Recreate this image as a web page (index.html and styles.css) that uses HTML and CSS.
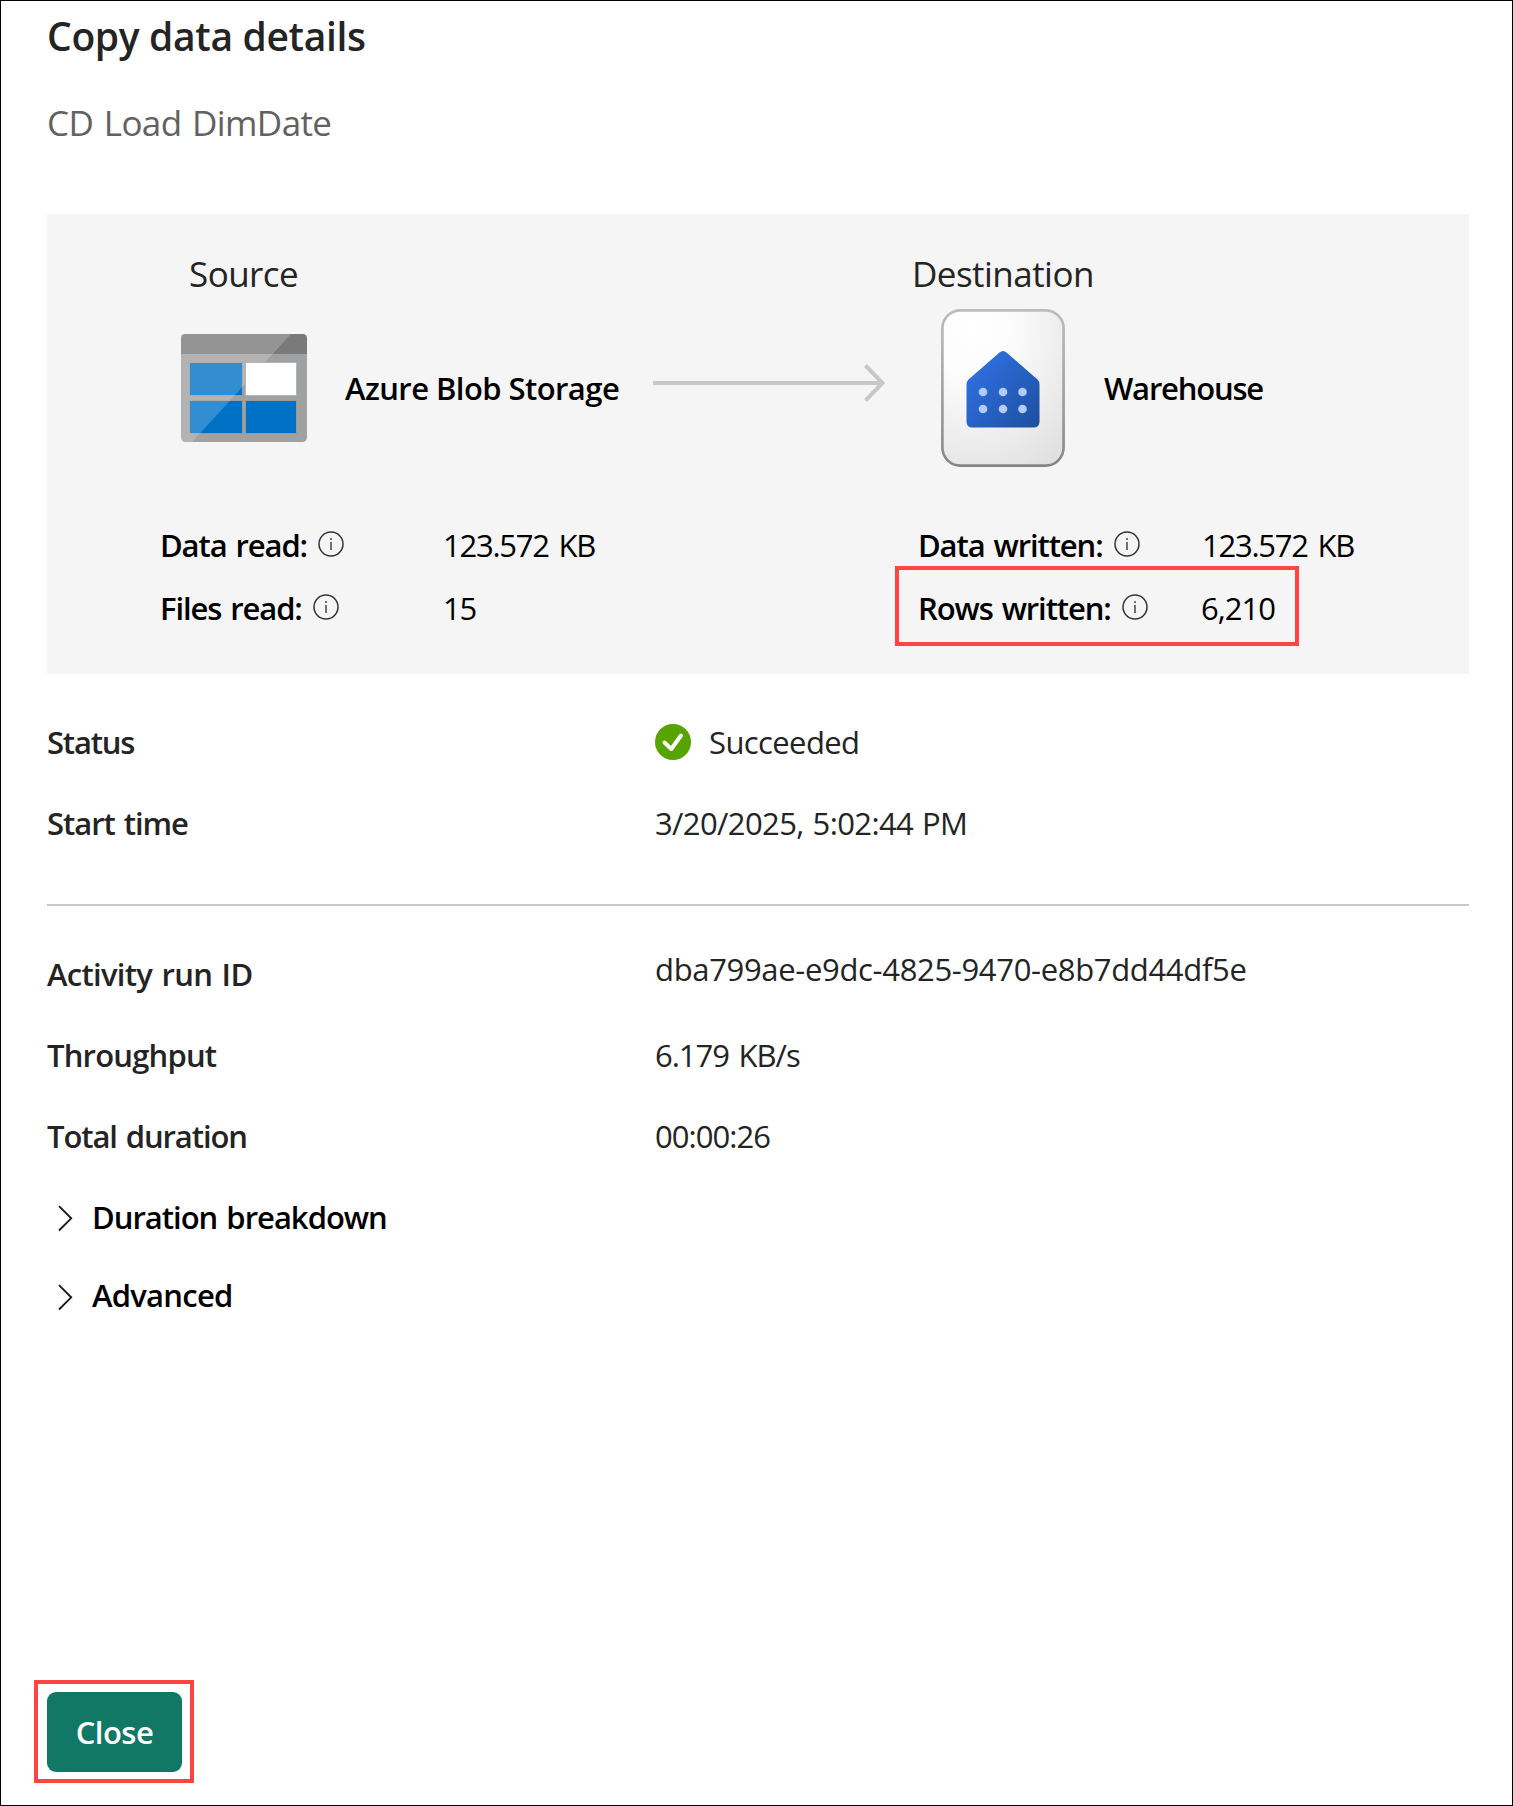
FILE: index.html
```html
<!DOCTYPE html>
<html lang="en">
<head>
<meta charset="utf-8">
<title>Copy data details</title>
<link rel="stylesheet" href="styles.css">
</head>
<body>
<svg class="defs" width="0" height="0" aria-hidden="true">
  <symbol id="info" viewBox="0 0 26 26">
    <circle cx="13" cy="13" r="12" fill="none" stroke="#333" stroke-width="1.5"/>
    <path d="M13 11v8" stroke="#444" stroke-width="1.5"/>
    <circle cx="13" cy="8" r="1" fill="#444"/>
  </symbol>
  <symbol id="chevron" viewBox="0 0 15 27">
    <path d="M1 1.2 13.2 13.3 1 25.5" fill="none" stroke="#1b1a19" stroke-width="1.9"/>
  </symbol>
</svg>
<main class="page">
  <h1 class="title">Copy data details</h1>
  <p class="subtitle">CD Load DimDate</p>

  <section class="panel">
    <div class="ends">
      <span class="source-head">Source</span>
      <span class="dest-head">Destination</span>
    </div>
    <div class="flow">
      <svg class="blob-icon" viewBox="0 0 126 108">
        <defs><clipPath id="frame"><rect width="126" height="108" rx="4.5"/></clipPath></defs>
        <g clip-path="url(#frame)">
          <rect width="126" height="108" fill="#a0a1a2"/>
          <rect width="126" height="20" fill="#7a7a7a"/>
          <g stroke="#97999b" stroke-width="1">
            <rect x="8.5" y="28.5" width="53" height="33" fill="#0072c6"/>
            <rect x="8.5" y="66.5" width="53" height="33" fill="#0072c6"/>
            <rect x="64.5" y="66.5" width="51" height="33" fill="#0072c6"/>
          </g>
          <path d="M0 0H110L11 108H0Z" fill="#fff" fill-opacity=".2"/>
          <rect x="64.5" y="28.5" width="51" height="33" fill="#fff" stroke="#b3b4b5" stroke-width="1"/>
        </g>
      </svg>
      <strong class="source-name">Azure Blob Storage</strong>
      <svg class="arrow" viewBox="0 0 232 38">
        <path d="M0 19H229M212.500 1.500 229.500 19 212.500 36.500" fill="none" stroke="#c8c8c8" stroke-width="4"/>
      </svg>
      <svg class="warehouse-icon" viewBox="0 0 124 158">
        <defs>
          <radialGradient id="card" cx=".25" cy=".1" r="1.1"><stop offset="0" stop-color="#fff"/><stop offset=".3" stop-color="#fcfcfc"/><stop offset="1" stop-color="#e0e0e0"/></radialGradient>
          <linearGradient id="edge" x1="0" y1="0" x2="0" y2="1"><stop offset="0" stop-color="#bdbdbd"/><stop offset="1" stop-color="#858585"/></linearGradient>
          <linearGradient id="house" x1=".1" y1=".2" x2="1" y2="1"><stop offset="0" stop-color="#2f6fe0"/><stop offset="1" stop-color="#1b4f9e"/></linearGradient>
        </defs>
        <rect x="1.400" y="1.400" width="121.200" height="155.200" rx="18" fill="url(#card)" stroke="url(#edge)" stroke-width="2.600"/>
        <path d="M58.500 43.500Q62 40.500 65.500 43.500L96.500 70.500Q98.500 72.500 98.500 75.500V112.500Q98.500 118.500 92.500 118.500H31.500Q25.500 118.500 25.500 112.500V75.500Q25.500 72.500 27.500 70.500Z" fill="url(#house)"/>
        <g fill="#b3cbf8"><circle cx="42" cy="83" r="4.300"/><circle cx="62" cy="83" r="4.300"/><circle cx="81.500" cy="83" r="4.300"/><circle cx="42" cy="100" r="4.300"/><circle cx="62" cy="100" r="4.300"/><circle cx="81.500" cy="100" r="4.300"/></g>
      </svg>
      <strong class="dest-name">Warehouse</strong>
    </div>
    <div class="stats">
      <div class="stat"><span class="stat-label read">Data read:</span><svg class="info"><use href="#info"/></svg></div>
      <span class="amount">123.572 KB</span>
      <div class="stat"><span class="stat-label written">Data written:</span><svg class="info"><use href="#info"/></svg></div>
      <span class="amount">123.572 KB</span>
      <div class="stat"><span class="stat-label read">Files read:</span><svg class="info"><use href="#info"/></svg></div>
      <span class="amount">15</span>
      <div class="stat marked"><span class="stat-label written">Rows written:</span><svg class="info"><use href="#info"/></svg></div>
      <span class="amount rows">6,210</span>
    </div>
  </section>

  <dl class="details summary">
    <dt class="status">Status</dt>
    <dd class="result"><svg class="check" viewBox="0 0 36 36"><circle cx="18" cy="18" r="18" fill="#57a300"/><path d="M9.500 18.500 16.300 25 26 11.500" fill="none" stroke="#fff" stroke-width="4" stroke-linecap="round" stroke-linejoin="round"/></svg>Succeeded</dd>
    <dt class="start">Start time</dt>
    <dd class="time">3/20/2025, 5:02:44 PM</dd>
  </dl>
  <dl class="details run">
    <dt class="activity">Activity run ID</dt>
    <dd class="run-id">dba799ae-e9dc-4825-9470-e8b7dd44df5e</dd>
    <dt>Throughput</dt>
    <dd class="rate">6.179 KB/s</dd>
    <dt class="total">Total duration</dt>
    <dd class="duration">00:00:26</dd>
  </dl>
  <div class="expander"><svg class="chevron"><use href="#chevron"/></svg><span class="breakdown">Duration breakdown</span></div>
  <div class="expander advanced"><svg class="chevron"><use href="#chevron"/></svg><span>Advanced</span></div>

  <div class="footer"><button class="close">Close</button></div>
</main>
</body>
</html>
```
FILE: styles.css
```css
*, *::after { box-sizing: border-box; margin: 0; padding: 0; }
body { background: #fff; }
.defs { position: absolute; }
svg { flex: none; display: block; }
.page {
  display: flex;
  flex-direction: column;
  width: 1513px;
  height: 1806px;
  padding: 8px 43px 22px 46px;
  border: 1px solid #000;
  background: #fff;
  color: #242424;
  font: 400 31px/40px "Open Sans", "Noto Sans", sans-serif;
  letter-spacing: -0.6px;
  white-space: nowrap;
}
.title { font-size: 39px; line-height: 54px; font-weight: 600; letter-spacing: -0.34px; }
.subtitle { margin-top: 36px; color: #616161; font-size: 35px; line-height: 48px; letter-spacing: -0.6px; word-spacing: 2px; }

.panel { margin-top: 67px; height: 460px; padding-top: 36px; background: #f5f5f5; color: #000; }
.ends { display: grid; grid-template-columns: 723px 1fr; padding-left: 142px; color: #242424; font-size: 35px; line-height: 48px; letter-spacing: -0.54px; }
.flow { display: flex; align-items: center; height: 158px; margin-top: 11px; padding-left: 134px; }
.flow strong { font-weight: 600; }
.blob-icon { width: 126px; height: 108px; }
.source-name { width: 307px; margin-left: 38px; letter-spacing: -0.56px; }
.arrow { width: 232px; height: 38px; margin: 0 56px 10px 1px; }
.warehouse-icon { width: 124px; height: 158px; }
.dest-name { margin-left: 39px; letter-spacing: -1.2px; }
.stats { display: grid; grid-template-columns: 283px 475px 284px 1fr; grid-auto-rows: 40px; row-gap: 23px; margin-top: 58px; padding-left: 113px; }
.stat { position: relative; display: flex; gap: 11px; }
.stat-label { font-weight: 600; }
.read { letter-spacing: -1.1px; word-spacing: 2px; }
.written { letter-spacing: -1.1px; word-spacing: 2px; }
.info { width: 26px; height: 26px; margin-top: 6px; }
.amount { letter-spacing: -1.25px; word-spacing: 3px; }
.rows { margin-left: -1px; letter-spacing: -1px; }
.marked::after { content: ""; position: absolute; left: -23px; top: -22px; width: 404px; height: 80px; border: 4px solid #ff4444; }

.details { display: grid; grid-template-columns: 608px 1fr; row-gap: 41px; }
.details dt { font-weight: 600; letter-spacing: -0.8px; }
.summary { height: 232px; padding-top: 48px; border-bottom: 2px solid #c8c8c8; align-content: start; }
.summary .status { letter-spacing: -1.2px; }
.summary .start { letter-spacing: -1.05px; word-spacing: 2px; }
.result { display: flex; gap: 18px; }
.check { width: 36px; height: 36px; margin-top: 2px; }
.time { letter-spacing: -0.62px; word-spacing: 1.5px; }
.run { padding-top: 48px; }
.details .activity { letter-spacing: -0.7px; word-spacing: 2px; }
.run-id { margin-top: -5px; letter-spacing: -0.33px; }
.rate { letter-spacing: -1px; word-spacing: 2.5px; }
.details .total { letter-spacing: -1.1px; word-spacing: 2px; }
.duration { letter-spacing: -0.95px; }
.expander { display: flex; gap: 19px; margin-top: 41px; padding-left: 11px; color: #000; font-weight: 600; letter-spacing: -0.75px; }
.breakdown { letter-spacing: -1px; word-spacing: 2px; }
.chevron { width: 15px; height: 27px; margin-top: 8px; }
.advanced { margin-top: 38px; }
.advanced .chevron { margin-top: 9px; }

.footer { width: 160px; height: 103px; margin: auto 0 0 -13px; padding: 8px 9px; border: 4px solid #ff4444; }
.close { width: 135px; height: 80px; border: 0; border-radius: 9px; background: #117865; color: #fff; font: inherit; font-weight: 600; letter-spacing: -0.5px; }
```
